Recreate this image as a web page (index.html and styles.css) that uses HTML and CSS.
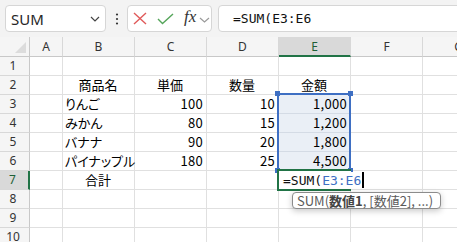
FILE: index.html
```html
<!DOCTYPE html>
<html lang="ja">
<head>
	<meta charset="UTF-8">
	<title>SUM の入力</title>
	<link rel="stylesheet" href="styles.css">
</head>
<body>
	<div class="toolbar">
		<div class="name-box">
			<span class="name-text">SUM</span>
			<svg class="name-chevron" width="10" height="6" viewBox="0 0 10 6"><polyline points="1,1 5,5 9,1" fill="none" stroke="#444" stroke-width="1.2"/></svg>
		</div>
		<div class="more">
			<svg width="4" height="12" viewBox="0 0 4 12"><circle cx="2" cy="1.5" r="1.1" fill="#333"/><circle cx="2" cy="6" r="1.1" fill="#333"/><circle cx="2" cy="10.5" r="1.1" fill="#333"/></svg>
		</div>
		<div class="fx-box">
			<svg class="icon-cancel" width="14" height="13" viewBox="0 0 14 13"><path d="M1 1 L13 12 M13 1 L1 12" stroke="#e05a5a" stroke-width="1.4" fill="none"/></svg>
			<svg class="icon-enter" width="17" height="12" viewBox="0 0 17 12"><polyline points="1,6 5.5,10.5 16,1" fill="none" stroke="#55a55a" stroke-width="1.4"/></svg>
			<span class="fx-label">fx</span>
			<svg class="fx-chevron" width="11" height="6" viewBox="0 0 11 6"><polyline points="1,1 5.5,5 10,1" fill="none" stroke="#9a9a9a" stroke-width="1.2"/></svg>
		</div>
		<div class="formula-box">=SUM(E3:E6</div>
	</div>

	<div class="sheet">
		<div class="grid">
			<div class="corner"><span class="corner-mark"></span></div>
			<div class="col-head">A</div>
			<div class="col-head">B</div>
			<div class="col-head">C</div>
			<div class="col-head">D</div>
			<div class="col-head is-active">E</div>
			<div class="col-head">F</div>
			<div class="col-head">G</div>

			<div class="row-head">1</div>
			<div class="cell"></div><div class="cell"></div><div class="cell"></div><div class="cell"></div><div class="cell"></div><div class="cell"></div><div class="cell"></div>

			<div class="row-head">2</div>
			<div class="cell"></div>
			<div class="cell center">商品名</div>
			<div class="cell center">単価</div>
			<div class="cell center">数量</div>
			<div class="cell center">金額</div>
			<div class="cell"></div><div class="cell"></div>

			<div class="row-head">3</div>
			<div class="cell"></div>
			<div class="cell">りんご</div>
			<div class="cell num">100</div>
			<div class="cell num">10</div>
			<div class="cell num in-range">1,000</div>
			<div class="cell"></div><div class="cell"></div>

			<div class="row-head">4</div>
			<div class="cell"></div>
			<div class="cell">みかん</div>
			<div class="cell num">80</div>
			<div class="cell num">15</div>
			<div class="cell num in-range">1,200</div>
			<div class="cell"></div><div class="cell"></div>

			<div class="row-head">5</div>
			<div class="cell"></div>
			<div class="cell">バナナ</div>
			<div class="cell num">90</div>
			<div class="cell num">20</div>
			<div class="cell num in-range">1,800</div>
			<div class="cell"></div><div class="cell"></div>

			<div class="row-head">6</div>
			<div class="cell"></div>
			<div class="cell">パイナップル</div>
			<div class="cell num">180</div>
			<div class="cell num">25</div>
			<div class="cell num in-range">4,500</div>
			<div class="cell"></div><div class="cell"></div>

			<div class="row-head is-active">7</div>
			<div class="cell"></div>
			<div class="cell center">合計</div>
			<div class="cell"></div><div class="cell"></div><div class="cell"></div><div class="cell"></div><div class="cell"></div>

			<div class="row-head">8</div>
			<div class="cell"></div><div class="cell"></div><div class="cell"></div><div class="cell"></div><div class="cell"></div><div class="cell"></div><div class="cell"></div>

			<div class="row-head">9</div>
			<div class="cell"></div><div class="cell"></div><div class="cell"></div><div class="cell"></div><div class="cell"></div><div class="cell"></div><div class="cell"></div>

			<div class="row-head">10</div>
			<div class="cell"></div><div class="cell"></div><div class="cell"></div><div class="cell"></div><div class="cell"></div><div class="cell"></div><div class="cell"></div>
		</div>

		<div class="range">
			<i class="handle tl"></i><i class="handle tr"></i><i class="handle bl"></i><i class="handle br"></i>
		</div>

		<div class="editor">
			<span class="editor-text">=SUM(<span class="ref">E3:E6</span></span><span class="caret"></span>
		</div>

		<div class="tip">SUM(<b>数値1</b>, [数値2], ...)</div>
	</div>
</body>
</html>
```

FILE: styles.css
```css
html, body {
	margin: 0;
	padding: 0;
}

body {
	width: 457px;
	height: 242px;
	overflow: hidden;
	background-color: white;
	font-family: "Noto Sans CJK JP", "Noto Sans", sans-serif;
	color: #000;
}

.toolbar {
	display: flex;
	align-items: flex-start;
	height: 37px;
	padding: 5px 0 0 5px;
	box-sizing: border-box;
	background-color: #f3f3f3;
}

.name-box,
.fx-box,
.formula-box {
	height: 27px;
	box-sizing: border-box;
	background-color: white;
	border: 1px solid #d6d6d6;
	border-radius: 4px;
	display: flex;
	align-items: center;
}

.name-box {
	width: 101px;
	padding: 0 5px;
}

.name-text {
	font-family: "Noto Sans", sans-serif;
	font-size: 15px;
	color: #262626;
	flex: 1;
}

.more {
	width: 21px;
	height: 27px;
	display: flex;
	align-items: center;
	justify-content: center;
}

.fx-box {
	width: 85px;
	padding-left: 5px;
}

.icon-enter {
	margin-left: 10px;
	margin-top: 1px;
}

.fx-label {
	font-family: "Liberation Serif", serif;
	font-style: italic;
	font-size: 17px;
	color: #333;
	margin-left: 10px;
	margin-top: -3px;
}

.fx-chevron {
	margin-left: 3px;
	margin-top: 2px;
}

.formula-box {
	flex: 1;
	margin-left: 6px;
	margin-right: -10px;
	padding-left: 14px;
	font-family: "DejaVu Sans Mono", monospace;
	font-size: 13px;
	color: #111;
}

/* sheet */

.sheet {
	position: relative;
	overflow: hidden;
}

.grid {
	display: grid;
	grid-template-columns: 30px 33px repeat(6, 72px);
	grid-template-rows: 20px repeat(10, 19px);
}

.corner,
.col-head,
.row-head,
.cell {
	box-sizing: border-box;
	border-right: 1px solid #e0e0e0;
	border-bottom: 1px solid #e0e0e0;
	white-space: nowrap;
}

.corner {
	position: relative;
	background-color: #f5f5f5;
	border-right-color: #c8c8c8;
	border-bottom-color: #c8c8c8;
}

.corner-mark {
	position: absolute;
	right: 3px;
	bottom: 3px;
	width: 0;
	height: 0;
	border-left: 11px solid transparent;
	border-bottom: 11px solid #dcdcdc;
}

.col-head,
.row-head {
	background-color: #f5f5f5;
	font-family: "Noto Sans", sans-serif;
	font-size: 12px;
	color: #333;
	display: flex;
	align-items: center;
	justify-content: center;
}

.col-head {
	border-right-color: #d8d8d8;
	border-bottom-color: #c8c8c8;
}

.row-head {
	border-right-color: #c8c8c8;
	border-bottom-color: #d8d8d8;
	padding-right: 3px;
	align-items: flex-start;
	line-height: 18px;
}

.col-head.is-active {
	background-color: #d9d9d9;
	color: #1e5f36;
	border-bottom: 2px solid #217346;
	padding-top: 1px;
}

.row-head.is-active {
	background-color: #d9d9d9;
	color: #1e5f36;
	border-right: 2px solid #217346;
}

.cell {
	font-size: 13px;
	line-height: 18px;
	padding: 0 3px 0 2px;
	font-feature-settings: "palt";
}

.cell.center {
	text-align: center;
}

.cell.num {
	text-align: right;
	letter-spacing: 0.3px;
}

.cell.in-range {
	background-color: #eaeff6;
	border-bottom-color: #d4dbe5;
}

/* overlays */

.range {
	position: absolute;
	left: 277px;
	top: 56px;
	width: 74px;
	height: 78px;
	box-sizing: border-box;
	border: 2px solid #3e6fc3;
}

.handle {
	position: absolute;
	width: 5px;
	height: 5px;
	background-color: #3e6fc3;
}

.handle.tl { left: -4px; top: -4px; }
.handle.tr { right: -4px; top: -4px; }
.handle.bl { left: -4px; bottom: -4px; }
.handle.br { right: -4px; bottom: -4px; }

.editor {
	position: absolute;
	left: 277px;
	top: 132px;
	width: 74px;
	height: 22px;
	box-sizing: border-box;
	border: 2px solid #217346;
	border-right: none;
	background-color: white;
	display: flex;
	align-items: center;
	padding-left: 4px;
	white-space: nowrap;
}

.editor-text {
	font-family: "DejaVu Sans Mono", monospace;
	font-size: 13px;
	line-height: 17px;
	background-color: white;
	color: #111;
}

.ref {
	color: #3e6fc3;
}

.caret {
	display: inline-block;
	width: 2px;
	height: 16px;
	background-color: #000;
	margin-left: 1px;
	flex: none;
}

.tip {
	position: absolute;
	left: 292px;
	top: 155px;
	width: 149px;
	height: 17px;
	box-sizing: border-box;
	padding: 0 4px;
	border: 1px solid #8c8c8c;
	border-radius: 4px;
	background-color: white;
	box-shadow: 0 2px 6px rgba(0, 0, 0, 0.22);
	font-size: 13px;
	line-height: 15px;
	color: #5a5a5a;
	white-space: nowrap;
}

.tip b {
	font-weight: 600;
	color: #444;
}
```
